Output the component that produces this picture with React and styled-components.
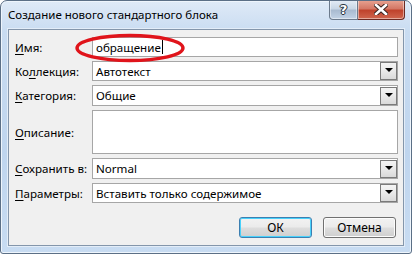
import React from "react";
import styled, { createGlobalStyle } from "styled-components";

const Global = createGlobalStyle`
  html, body { margin: 0; padding: 0; background: #fff; }
  body { font-family: "Noto Sans", "Open Sans", sans-serif; }
`;

const Window = styled.div`
  position: relative;
  width: 412px;
  height: 254px;
  box-sizing: border-box;
  border: 1px solid #5b6f86;
  border-radius: 7px 7px 3px 3px;
  background: linear-gradient(180deg, #dfeaf7 0%, #c9dcf1 12%, #bfd5ee 60%, #c8dcf2 100%);
  box-shadow: inset 0 0 0 1px #eef5fc;
  display: flex;
  flex-direction: column;
  overflow: hidden;
`;

const TitleBar = styled.div`
  height: 28px;
  display: flex;
  align-items: flex-start;
  flex-shrink: 0;
`;

const Title = styled.div`
  font-size: 11.5px;
  color: #000;
  padding: 6px 0 0 7px;
  white-space: nowrap;
`;

const Caption = styled.div`
  margin-left: auto;
  margin-right: 6px;
  margin-top: -1px;
  display: flex;
`;

const CapBtn = styled.div`
  width: ${p => p.$w}px;
  height: 20px;
  box-sizing: border-box;
  border: 1px solid ${p => (p.$red ? "#6d2a22" : "#6b7a8c")};
  border-top: none;
  border-radius: ${p => (p.$red ? "0 0 4px 0" : "0 0 0 4px")};
  ${p => (p.$red ? "border-left: none;" : "")}
  background: ${p =>
    p.$red
      ? "linear-gradient(180deg, #e8a493 0%, #d47866 45%, #c0432c 55%, #d0664e 100%)"
      : "linear-gradient(180deg, #e5edf6 0%, #c9d7e6 45%, #a9bbd0 55%, #c2d3e6 100%)"};
  box-shadow: inset 0 0 0 1px rgba(255, 255, 255, 0.45);
  display: flex;
  align-items: center;
  justify-content: center;
  color: #fff;
  font-family: "DejaVu Sans", sans-serif;
  font-weight: bold;
  font-size: 13px;
  text-shadow: 0 0 1px #2a3440, 0 0 1px #2a3440, 1px 0 0 #2a3440, -1px 0 0 #2a3440, 0 1px 0 #2a3440, 0 -1px 0 #2a3440;
`;

const Panel = styled.div`
  flex: 1;
  margin: 0 7px 7px 7px;
  border: 1px solid #8496ab;
  box-shadow: 0 0 0 1px #e3edf8;
  background: #f0f0f0;
  padding: 7px 5px 0 6px;
  display: flex;
  flex-direction: column;
  font-size: 11.6px;
  color: #000;
`;

const Form = styled.div`
  position: relative;
  display: grid;
  grid-template-columns: 77px 1fr;
  grid-template-rows: 20px 20px 21px 44px 21px 20px;
  row-gap: 4px;
`;

const Label = styled.div`
  display: flex;
  align-items: center;
  white-space: nowrap;
  u { text-decoration: underline; text-underline-offset: 2px; }
`;

const Field = styled.div`
  box-sizing: border-box;
  border: 1px solid #a6a6a6;
  background: #fff;
  display: flex;
  align-items: center;
  padding-left: 3px;
  position: relative;
  white-space: nowrap;
`;

const Caret = styled.span`
  display: inline-block;
  width: 1px;
  height: 14px;
  background: #000;
  margin-left: 1px;
`;

const DropBtn = styled.div`
  margin-left: auto;
  width: 17px;
  height: 18px;
  box-sizing: border-box;
  border: 1px solid #7a7a7a;
  background: linear-gradient(180deg, #f4f4f4 0%, #e9e9e9 50%, #d9d9d9 100%);
  display: flex;
  align-items: center;
  justify-content: center;
  padding-bottom: 2px;
  &::after {
    content: "";
    border-left: 4px solid transparent;
    border-right: 4px solid transparent;
    border-top: 4px solid #000;
  }
`;

const Ellipse = styled.svg`
  position: absolute;
  left: 59px;
  top: -4px;
  pointer-events: none;
`;

const Buttons = styled.div`
  display: flex;
  justify-content: flex-end;
  gap: 11px;
  margin-top: 14px;
  padding-right: 2px;
`;

const Button = styled.div`
  width: 73px;
  height: 21px;
  box-sizing: border-box;
  border: 1px solid ${p => (p.$def ? "#3c7fb1" : "#707070")};
  border-radius: 3px;
  background: linear-gradient(180deg, #f2f2f2 0%, #ebebeb 48%, #dddddd 52%, #cfcfcf 100%);
  box-shadow: inset 0 0 0 1px ${p => (p.$def ? "#48d1fb" : "#fcfcfc")};
  display: flex;
  align-items: center;
  justify-content: center;
  font-size: 12px;
`;

function Select({ value }) {
  return (
    <Field>
      {value}
      <DropBtn />
    </Field>
  );
}

export default function App() {
  return (
    <>
      <Global />
      <Window>
        <TitleBar>
          <Title>Создание нового стандартного блока</Title>
          <Caption>
            <CapBtn $w={29}>?</CapBtn>
            <CapBtn $w={47} $red>
              <svg width="14" height="11" viewBox="0 0 14 11">
                <path d="M2 1 L12 10 M12 1 L2 10" stroke="#3a2420" strokeWidth="4.6" strokeLinecap="square" />
                <path d="M2 1 L12 10 M12 1 L2 10" stroke="#fff" strokeWidth="2.6" strokeLinecap="square" />
              </svg>
            </CapBtn>
          </Caption>
        </TitleBar>
        <Panel>
          <Form>
            <Label><u>И</u>мя:</Label>
            <Field>
              обращение<Caret />
            </Field>
            <Label>Ко<u>л</u>лекция:</Label>
            <Select value="Автотекст" />
            <Label><u>К</u>атегория:</Label>
            <Select value="Общие" />
            <Label><u>О</u>писание:</Label>
            <Field />
            <Label><u>С</u>охранить в:</Label>
            <Select value="Normal" />
            <Label><u>П</u>араметры:</Label>
            <Select value="Вставить только содержимое" />
            <Ellipse width="112" height="30" viewBox="0 0 112 30">
              <ellipse cx="56" cy="15" rx="53" ry="12.5" fill="none" stroke="#e0141b" strokeWidth="3.4" />
            </Ellipse>
          </Form>
          <Buttons>
            <Button $def>ОК</Button>
            <Button>Отмена</Button>
          </Buttons>
        </Panel>
      </Window>
    </>
  );
}
